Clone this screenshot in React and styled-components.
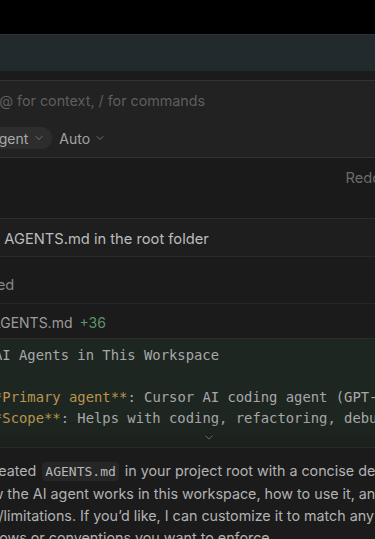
import React from 'react';
import styled, { createGlobalStyle } from 'styled-components';
import { ChevronDown, Infinity as InfinityIcon } from 'lucide-react';

const GlobalStyle = createGlobalStyle`
  html, body {
    margin: 0;
    padding: 0;
    background: #1b1b1b;
    overflow: hidden;
  }
  body {
    width: 375px;
    height: 539px;
    font-family: Inter, "Noto Sans", sans-serif;
  }
`;

const SANS = `Inter, "Noto Sans", sans-serif`;
const MONO = `"DejaVu Sans Mono", "Liberation Mono", monospace`;

const Page = styled.div`
  display: flex;
  flex-direction: column;
  width: 375px;
  height: 539px;
  overflow: hidden;
`;

const TopBar = styled.div`
  height: 34px;
  background: #000;
  flex-shrink: 0;
`;

const TabBand = styled.div`
  height: 36px;
  background: #232a2d;
  border-top: 1px solid #2a3235;
  flex-shrink: 0;
`;

const Gap = styled.div`
  height: 9px;
  background: #1b1b1b;
  flex-shrink: 0;
`;

// the chat column is wider than the window: it is cut on both sides
const Column = styled.div`
  display: flex;
  flex-direction: column;
  margin-left: -52px;
  width: 522px;
  flex-shrink: 0;
`;

const Composer = styled.div`
  display: flex;
  flex-direction: column;
  gap: 16px;
  background: #222;
  border-top: 1px solid #323232;
  border-bottom: 1px solid #333;
  padding: 10px 0 8px 14px;
`;

const Placeholder = styled.div`
  font-family: ${SANS};
  font-size: 14.3px;
  line-height: 20px;
  color: #5e5e5e;
`;

const Controls = styled.div`
  display: flex;
  align-items: center;
  gap: 7px;
`;

const Pill = styled.div`
  display: flex;
  align-items: center;
  gap: ${p => (p.$filled ? '5px' : '4px')};
  height: 22px;
  padding: 0 ${p => (p.$filled ? '7px' : '0')} 0 ${p => (p.$filled ? '8px' : '0')};
  border-radius: 11px;
  background: ${p => (p.$filled ? '#2d2d2d' : 'transparent')};
  color: ${p => (p.$filled ? '#a9a9a9' : '#a3a3a3')};
  font-family: ${SANS};
  font-size: 14px;

  svg {
    color: #8a8a8a;
  }
`;

const MessageBox = styled.div`
  display: flex;
  justify-content: flex-end;
  height: 61px;
  background: #1a1a1a;
  border-bottom: 1px solid #2c2c2c;
  padding: 10px 89px 0 0;
  box-sizing: border-box;
  font-family: ${SANS};
  font-size: 14.7px;
  line-height: 20px;
  color: #6b6b6b;
`;

const Row = styled.div`
  display: flex;
  align-items: center;
  gap: 7px;
  height: ${p => p.$h}px;
  box-sizing: border-box;
  padding-left: ${p => p.$pad}px;
  padding-top: ${p => p.$top}px;
  background: ${p => p.$bg};
  border-bottom: 1px solid ${p => p.$line};
  font-family: ${SANS};
  font-size: ${p => p.$size}px;
  color: ${p => p.$color};
  white-space: nowrap;
`;

const Added = styled.span`
  color: #5a9468;
`;

const CodeBlock = styled.div`
  position: relative;
  height: 109px;
  box-sizing: border-box;
  padding: 6px 0 0 21px;
  background: #1e2621;
  border-bottom: 1px solid #2a2a2a;
  overflow: hidden;
  font-family: ${MONO};
  font-size: 13.85px;
  line-height: 21px;
  color: #a8a8a8;
  white-space: pre;

  &::after {
    content: '';
    position: absolute;
    left: 0;
    right: 0;
    bottom: 0;
    height: 26px;
    background: linear-gradient(to bottom, rgba(28, 31, 29, 0), rgba(28, 31, 29, 0.95));
  }
`;

const CodeLine = styled.div`
  height: 21px;
`;

const Bold = styled.span`
  color: #b9954c;
`;

const Expand = styled.div`
  position: absolute;
  left: 50%;
  bottom: 3px;
  transform: translateX(-50%);
  z-index: 1;
  color: #787878;
  display: flex;
`;

const Reply = styled.div`
  padding: 12px 0 0 9px;
  font-family: ${SANS};
  font-size: 14.3px;
  line-height: 22px;
  color: #b2b2b2;
  white-space: nowrap;
`;

const InlineCode = styled.code`
  font-family: ${MONO};
  font-size: 13px;
  color: #b8b8b8;
  background: #262626;
  border-radius: 4px;
  padding: 2px 3px;
  margin: 0 2px;
`;

export default function App() {
  return (
    <>
      <GlobalStyle />
      <Page>
        <TopBar />
        <TabBand />
        <Gap />
        <Column>
          <Composer>
            <Placeholder>Plan, @ for context, / for commands</Placeholder>
            <Controls>
              <Pill $filled>
                <InfinityIcon size={14} strokeWidth={1.8} />
                <span>Agent</span>
                <ChevronDown size={12} strokeWidth={1.5} />
              </Pill>
              <Pill>
                <span>Auto</span>
                <ChevronDown size={12} strokeWidth={1.5} />
              </Pill>
            </Controls>
          </Composer>

          <MessageBox>Redo</MessageBox>

          <Row $h={38} $top={3} $pad={6} $size={14.7} $bg="#1e1e1e" $line="#2a2a2a" $color="#bcbcbc">
            Create AGENTS.md in the root folder
          </Row>
          <Row $h={47} $top={9} $pad={11} $size={14.7} $bg="#1b1b1b" $line="#262626" $color="#878787">
            Created
          </Row>
          <Row $h={35} $top={3} $pad={43} $size={14} $bg="#1b1b1b" $line="#2c2c2c" $color="#9b9b9b">
            <span>AGENTS.md</span>
            <Added>+36</Added>
          </Row>

          <CodeBlock>
            <CodeLine>## AI Agents in This Workspace</CodeLine>
            <CodeLine> </CodeLine>
            <CodeLine>
              - <Bold>**Primary agent**</Bold>: Cursor AI coding agent (GPT-5)
            </CodeLine>
            <CodeLine>
              - <Bold>**Scope**</Bold>: Helps with coding, refactoring, debugging, and docs
            </CodeLine>
            <Expand>
              <ChevronDown size={13} strokeWidth={1.5} />
            </Expand>
          </CodeBlock>

          <Reply>
            I’ve created <InlineCode>AGENTS.md</InlineCode> in your project root with a concise description
            <br />
            of how the AI agent works in this workspace, how to use it, and its
            <br />
            scope/limitations. If you’d like, I can customize it to match any
            <br />
            workflows or conventions you want to enforce.
          </Reply>
        </Column>
      </Page>
    </>
  );
}
